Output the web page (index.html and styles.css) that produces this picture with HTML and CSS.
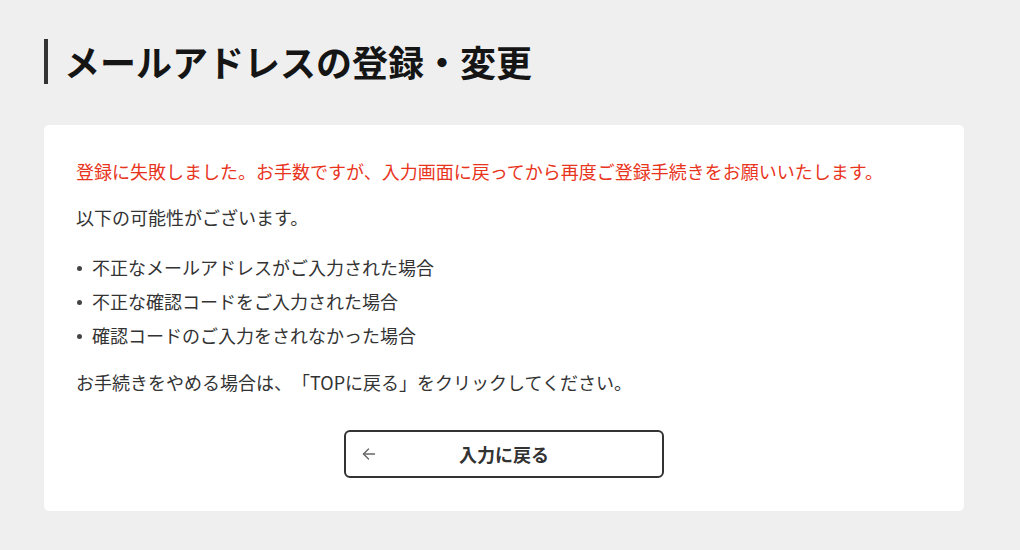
FILE: index.html
```html
<!DOCTYPE html>
<html lang="ja">

<head>
  <meta charset="UTF-8">
  <meta name="viewport" content="width=device-width, initial-scale=1.0">
  <title>メールアドレスの登録・変更</title>
  <link rel="stylesheet" href="styles.css">
</head>

<body>
  <div class="page">
    <h1 class="page-title">メールアドレスの登録・変更</h1>

    <div class="card">
      <p class="error">登録に失敗しました。お手数ですが、入力画面に戻ってから再度ご登録手続きをお願いいたします。</p>
      <p class="lead">以下の可能性がございます。</p>

      <ul class="reasons">
        <li>不正なメールアドレスがご入力された場合</li>
        <li>不正な確認コードをご入力された場合</li>
        <li>確認コードのご入力をされなかった場合</li>
      </ul>

      <p class="note">お手続きをやめる場合は、「TOPに戻る」をクリックしてください。</p>

      <div class="actions">
        <a href="#" class="back-btn">
          <svg class="back-icon" width="14" height="14" viewBox="0 0 14 14" fill="none" stroke="currentColor" stroke-width="1.4" stroke-linecap="round" stroke-linejoin="round">
            <path d="M12.5 7H1.5"/>
            <path d="M6.5 2L1.5 7l5 5"/>
          </svg>
          <span>入力に戻る</span>
        </a>
      </div>
    </div>
  </div>
</body>

</html>
```

FILE: styles.css
```css
body {
  font-family: "Noto Sans CJK JP", "Noto Sans", sans-serif;
  margin: 0;
  background-color: #efefef;
  color: #333;
  text-spacing-trim: space-all;
}

.page {
  padding: 39px 56px 40px 44px;
}

.page-title {
  margin: 0 0 41px;
  padding-left: 16px;
  border-left: 4px solid #333;
  font-size: 36px;
  line-height: 45px;
  font-weight: 700;
  color: #151515;
}

.card {
  background-color: white;
  border-radius: 5px;
  padding: 32px 32px 33px;
  font-size: 18px;
  line-height: 28px;
}

.card p {
  margin: 0;
}

.error {
  color: #e8341c;
}

.lead {
  margin-top: 18px !important;
}

.reasons {
  list-style: none;
  margin: 22px 0 0;
  padding: 0;
}

.reasons li {
  position: relative;
  padding-left: 16px;
  margin-bottom: 6px;
}

.reasons li:last-child {
  margin-bottom: 0;
}

.reasons li::before {
  content: "";
  position: absolute;
  left: 1px;
  top: 13px;
  width: 5px;
  height: 5px;
  border-radius: 50%;
  background-color: #444;
}

.note {
  margin-top: 19px !important;
}

.actions {
  margin-top: 34px;
  display: flex;
  justify-content: center;
}

.back-btn {
  position: relative;
  display: flex;
  align-items: center;
  justify-content: center;
  width: 320px;
  height: 48px;
  box-sizing: border-box;
  border: 2px solid #333;
  border-radius: 6px;
  color: #333;
  font-weight: 700;
  text-decoration: none;
}

.back-icon {
  position: absolute;
  left: 16px;
  top: 50%;
  margin-top: -7px;
  color: #666;
}
```
